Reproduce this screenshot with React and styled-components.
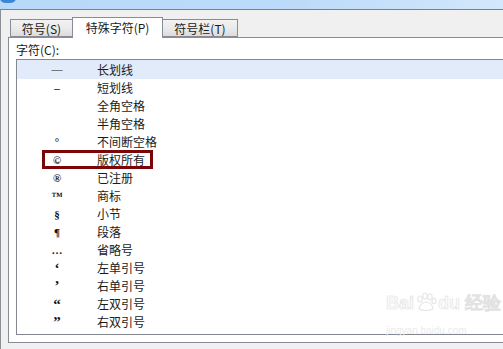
import React from 'react';
import styled, { createGlobalStyle } from 'styled-components';

const GlobalStyle = createGlobalStyle`
  html, body {
    margin: 0;
    padding: 0;
    background: #f0f0f0;
  }
  body {
    font-family: "Noto Sans CJK SC", "Liberation Sans", sans-serif;
    font-size: 12px;
    color: #1a1a1a;
  }
`;

const rows = [
  { sym: '—', name: '长划线' },
  { sym: '–', name: '短划线' },
  { sym: '', name: '全角空格' },
  { sym: '', name: '半角空格' },
  { sym: '°', name: '不间断空格' },
  { sym: '©', name: '版权所有', marked: true },
  { sym: '®', name: '已注册' },
  { sym: '™', name: '商标' },
  { sym: '§', name: '小节' },
  { sym: '¶', name: '段落' },
  { sym: '…', name: '省略号' },
  { sym: '‘', name: '左单引号', big: true },
  { sym: '’', name: '右单引号', big: true },
  { sym: '“', name: '左双引号', big: true },
  { sym: '”', name: '右双引号', big: true },
];

const tabs = [
  { label: '符号(S)', width: 63 },
  { label: '特殊字符(P)', width: 91, active: true },
  { label: '符号栏(T)', width: 76 },
];

const App = () => {
  return (
    <>
      <GlobalStyle />
      <Window>
        <TitleStrip>
          <TitleBlob />
        </TitleStrip>
        <Frame>
          <TabRow>
            {tabs.map((t) => (
              <Tab key={t.label} $active={t.active} $width={t.width}>
                {t.label}
              </Tab>
            ))}
          </TabRow>
          <Panel>
            <FieldLabel>字符(C):</FieldLabel>
            <ListBox>
              {rows.map((r, i) => (
                <Row key={r.name} $selected={i === 0}>
                  <SymbolCell $big={r.big}>{r.sym}</SymbolCell>
                  <NameCell>{r.name}</NameCell>
                  {r.marked && <Marker />}
                </Row>
              ))}
            </ListBox>
          </Panel>
        </Frame>
        <Watermark>
          <WatermarkMain>Bai<PawIcon />du 经验</WatermarkMain>
          <WatermarkSub>jingyan.baidu.com</WatermarkSub>
        </Watermark>
      </Window>
    </>
  );
};

const PawIcon = () => (
  <svg width="22" height="20" viewBox="0 0 22 20" style={{ verticalAlign: '-3px', margin: '0 1px' }}>
    <g fill="none" stroke="#e6e6e6" strokeWidth="1.2">
      <ellipse cx="5" cy="7" rx="2.2" ry="3" />
      <ellipse cx="10" cy="4" rx="2.2" ry="3" />
      <ellipse cx="15" cy="5" rx="2.2" ry="3" />
      <ellipse cx="19" cy="9" rx="2" ry="2.6" />
      <path d="M4 17 Q6 10 11 10 Q17 10 18 17 Q11 20 4 17 Z" />
    </g>
  </svg>
);

const Window = styled.div`
  position: relative;
  width: 503px;
  height: 349px;
  overflow: hidden;
  background: #f0f0f0;
`;

const TitleStrip = styled.div`
  position: relative;
  height: 9px;
  background: linear-gradient(90deg, #b9d9f9 0%, #bddbf9 60%, #d3e8fc 100%);
`;

const TitleBlob = styled.div`
  position: absolute;
  left: 0;
  top: -4px;
  width: 16px;
  height: 7px;
  border-radius: 0 0 5px 5px;
  background: #3d86d8;
`;

const Frame = styled.div`
  border-top: 1px solid #7c8088;
  border-left: 1px solid #8a8e95;
  padding: 7px 0 0 7px;
  height: 332px;
`;

const TabRow = styled.div`
  display: flex;
  align-items: flex-end;
  height: 20px;
  padding-left: 2px;
  position: relative;
  z-index: 1;
`;

const Tab = styled.div`
  box-sizing: border-box;
  width: ${(p) => p.$width}px;
  height: ${(p) => (p.$active ? 21 : 18)}px;
  margin-bottom: ${(p) => (p.$active ? -1 : 0)}px;
  border: 1px solid #898c95;
  border-bottom: ${(p) => (p.$active ? 'none' : '1px solid #898c95')};
  background: ${(p) =>
    p.$active ? '#ffffff' : 'linear-gradient(180deg, #f2f2f2 0%, #ebebeb 50%, #dcdcdc 100%)'};
  display: flex;
  align-items: center;
  justify-content: center;
  font-size: 12px;
  line-height: 1;
  color: #1a1a1a;
  padding-top: ${(p) => (p.$active ? 0 : 1)}px;
  & + & {
    margin-left: -1px;
  }
`;

const Panel = styled.div`
  box-sizing: border-box;
  height: 306px;
  border: 1px solid #898c95;
  border-right: none;
  background: #ffffff;
  padding: 4px 0 0 7px;
`;

const FieldLabel = styled.div`
  height: 17px;
  line-height: 16px;
  font-size: 12px;
  color: #1a1a1a;
`;

const ListBox = styled.div`
  box-sizing: border-box;
  height: 276px;
  border: 1px solid #828790;
  border-right: none;
  background: #ffffff;
`;

const Row = styled.div`
  position: relative;
  display: flex;
  align-items: center;
  height: 18px;
  background: ${(p) => (p.$selected ? '#e1ebfa' : 'transparent')};
  &:first-child {
    height: 19px;
  }
`;

const SymbolCell = styled.div`
  width: 80px;
  text-align: center;
  font-family: "Liberation Serif", "DejaVu Serif", serif;
  font-size: ${(p) => (p.$big ? 15 : 11)}px;
  font-weight: bold;
  line-height: 1;
  height: ${(p) => (p.$big ? 10 : 'auto')};
  color: #111;
`;

const NameCell = styled.div`
  font-size: 12px;
  line-height: 1;
  color: #1a1a1a;
`;

const Marker = styled.div`
  position: absolute;
  left: 25px;
  top: -1px;
  width: 111px;
  height: 19px;
  box-sizing: border-box;
  border: 3px solid #7a0608;
`;

const Watermark = styled.div`
  position: absolute;
  left: 386px;
  top: 292px;
  font-family: "Liberation Sans", sans-serif;
  pointer-events: none;
`;

const WatermarkMain = styled.div`
  font-size: 18px;
  font-weight: bold;
  line-height: 22px;
  -webkit-text-stroke: 0.6px #e2e2e2;
  color: #fbfbfb;
`;

const WatermarkSub = styled.div`
  font-size: 10px;
  line-height: 14px;
  margin-top: 10px;
  color: #ebebeb;
`;

export default App;
